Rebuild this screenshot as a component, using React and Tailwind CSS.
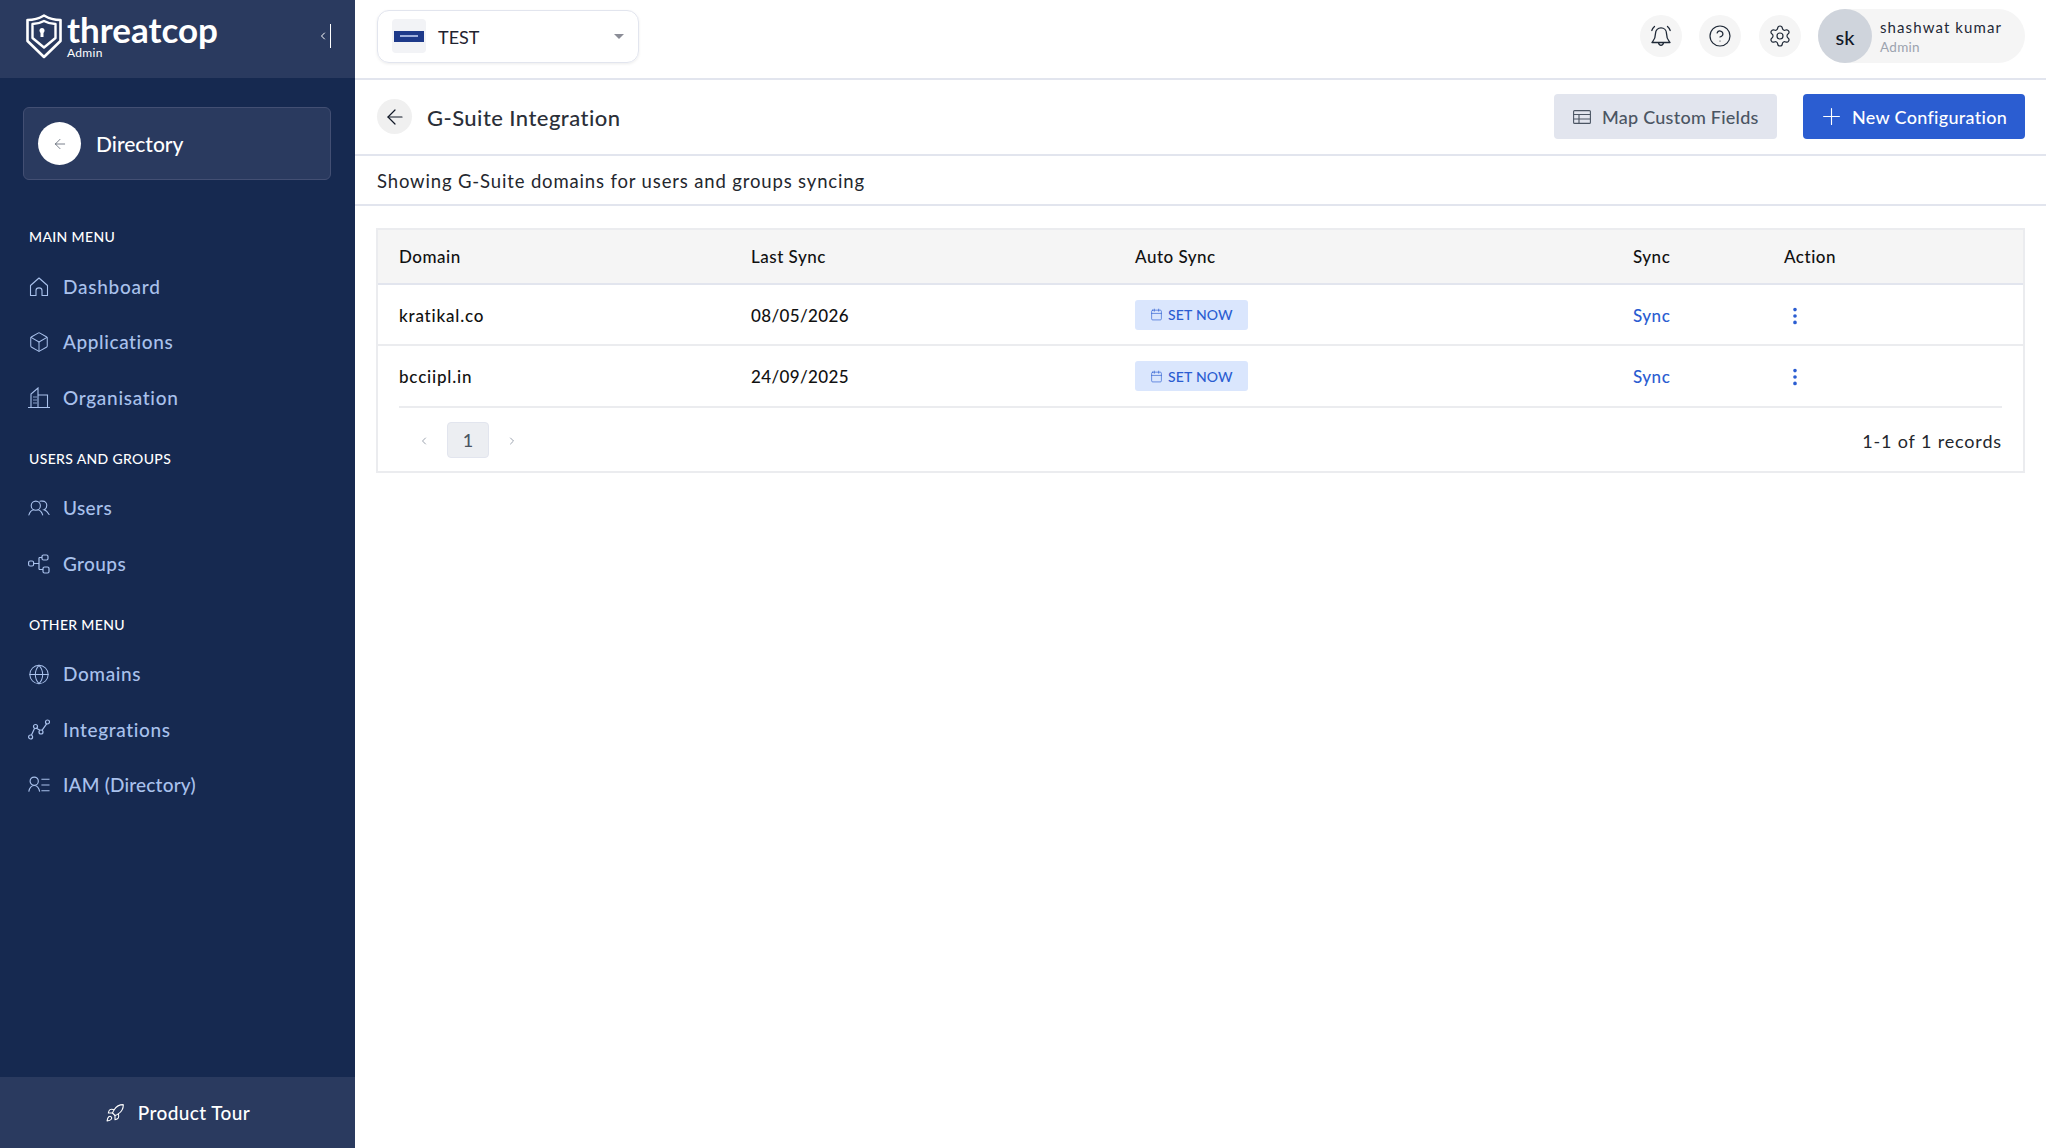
import React from "react";
import { ArrowLeft, Box, Globe, Rocket, Plus, CircleHelp, Settings, Calendar, MoreVertical, ChevronLeft, ChevronRight } from "lucide-react";

const FONT = "font-['Lato','Noto_Sans',sans-serif]";

const HomeIcon = () => (
  <svg width="20" height="20" viewBox="0 0 20 20" fill="none" stroke="currentColor" strokeWidth="1.1" strokeLinejoin="round">
    <path d="M1.500 8.500L10 1L18.500 8.500V18.500H13V13.500C13 10 7 10 7 13.500V18.500H1.500Z" />
  </svg>
);
const UsersIcon = () => (
  <svg width="24" height="18" viewBox="0 0 24 18" fill="none" stroke="currentColor" strokeWidth="1.200" strokeLinecap="round">
    <circle cx="8.500" cy="6.500" r="5" />
    <path d="M1 16.500C2 13.500 4 11.500 6 11M11 11C13 11.500 15 13.500 16 16.500" />
    <path d="M13 1.600C14 1.300 15 1.500 16 1.500C18.500 1.500 20.500 3.500 20.500 6S19 10.500 17.500 11C19.500 11.500 21.500 13.500 23 16" />
  </svg>
);
const Bell2 = () => (
  <svg width="24" height="24" viewBox="0 0 24 24" fill="none" stroke="currentColor" strokeWidth="1.300" strokeLinecap="round" strokeLinejoin="round">
    <path d="M6.500 9.500C6.500 6 9 3.800 12 3.800S17.500 6 17.500 9.500C17.500 15 19.500 16.500 21 18.500H3C4.500 16.500 6.500 15 6.500 9.500Z" />
    <path d="M9.500 18.700C9.800 20.500 10.800 21.300 12 21.300S14.200 20.500 14.500 18.700" />
    <path d="M2.800 6.500C3.300 4.800 4.300 3.500 5.500 2.500M21.200 6.500C20.700 4.800 19.700 3.500 18.500 2.500" />
  </svg>
);
const Building = () => (
  <svg width="22" height="22" viewBox="0 0 22 22" fill="none" stroke="currentColor" strokeWidth="1.100">
    <path d="M0 20.500H22M3 20V7L10 1V20M10 8H19.500V20" />
    <path d="M5.500 10h1M7.500 10h1M5.500 13h1M7.500 13h1M5.500 16h1M7.500 16h1" strokeWidth="1.400" />
  </svg>
);
const Group = () => (
  <svg width="22" height="22" viewBox="0 0 22 22" fill="none" stroke="currentColor" strokeWidth="1.200">
    <rect x="0.600" y="8" width="5" height="5" rx="1.500" />
    <rect x="14" y="2" width="6" height="5" rx="1.500" />
    <rect x="15" y="14" width="6" height="6" rx="1.500" />
    <path d="M5.600 10.500H11M11 4.500V16.500M11 4.500H14M11 16.500H15" />
  </svg>
);
const Graph = () => (
  <svg width="22" height="22" viewBox="0 0 22 22" fill="none" stroke="currentColor" strokeWidth="1.200">
    <circle cx="2.600" cy="18" r="2" /><circle cx="7.500" cy="7.500" r="2" /><circle cx="13" cy="13" r="2" /><circle cx="19.500" cy="3" r="2" />
    <path d="M3.500 16L6.600 9.300M8.400 9.300L12 11.200M14 11.300L18.600 4.800" />
  </svg>
);
const Iam = () => (
  <svg width="23" height="22" viewBox="0 0 23 22" fill="none" stroke="currentColor" strokeWidth="1.200">
    <circle cx="6.500" cy="7" r="4.300" />
    <path d="M0.800 18C1.600 13.800 3.800 11.500 6.500 11.500S11.400 13.800 12.200 18M14 5H22.500M14 11H22.500M14 17H22.500" />
  </svg>
);
const Shield = () => (
  <svg width="36" height="45" viewBox="0 0 36 45" fill="none" stroke="#fff">
    <path d="M1.500 6C8 6 13 4.500 18 1.500C23 4.500 28 6 34.500 6V27L18 43L1.500 27Z" strokeWidth="2.600" strokeLinejoin="round" />
    <path d="M6.500 10C11 10 14.500 9 18 7C21.500 9 25 10 29.500 10V24L18 33.500L6.500 24Z" strokeWidth="2.400" strokeLinejoin="round" />
    <circle cx="16" cy="16.500" r="2.500" fill="#fff" strokeWidth="0" />
    <rect x="14.500" y="17" width="3" height="6" fill="#fff" strokeWidth="0" />
  </svg>
);

const NavItem = ({ icon, label, track = "tracking-[0.6px]" }) => (
  <div className="flex h-[55.500px] items-center pl-[28px] text-[#a9c1ec]">
    <span className="flex w-[22px] justify-center">{icon}</span>
    <span className={`ml-[13px] pb-[1px] text-[19px] font-medium leading-none ${track}`}>{label}</span>
  </div>
);

const Heading = ({ children, className }) => (
  <div className={`pl-[29px] text-[14px] font-medium leading-[18px] tracking-[0.35px] text-white ${className}`}>{children}</div>
);

const IconCircle = ({ children }) => (
  <div className="flex h-[42px] w-[42px] items-center justify-center rounded-full bg-[#f5f5f5] text-[#1f2937]">{children}</div>
);

const rows = [
  { domain: "kratikal.co", last: "08/05/2026", h: "h-[61px]" },
  { domain: "bcciipl.in", last: "24/09/2025", h: "h-[60px]" },
];

export default function App() {
  return (
    <div className={`flex h-[1148px] w-[2046px] overflow-hidden bg-white ${FONT}`}>
      <aside className="flex w-[355px] shrink-0 flex-col bg-[#162950]">
        <div className="flex h-[78px] shrink-0 items-center bg-[#2a3a5f] pb-[6px] pl-[26px] pr-[24px] text-white">
          <Shield />
          <div className="ml-[5px] flex flex-col">
            <span className="text-[35px] font-bold leading-[30px]">threatcop</span>
            <span className="mt-[3px] text-[12px] leading-[12px] tracking-[0.3px]">Admin</span>
          </div>
          <div className="ml-auto flex h-[24px] items-center gap-[1px]">
            <ChevronLeft size={12} strokeWidth={2} />
            <span className="h-[24px] w-[1px] bg-white" />
          </div>
        </div>
        <div className="ml-[23px] mr-[24px] mt-[29px] flex h-[73px] items-center rounded-[6px] border border-[#434f73] bg-[#2a3a5f] pl-[14px]">
          <div className="flex h-[43px] w-[43px] items-center justify-center rounded-full bg-white text-[#374151]">
            <ArrowLeft size={16} strokeWidth={1} />
          </div>
          <span className="ml-[15px] text-[21px] font-medium leading-none text-white">Directory</span>
        </div>
        <Heading className="mt-[48px] mb-[13px]">MAIN MENU</Heading>
        <NavItem icon={<HomeIcon />} label="Dashboard" track="tracking-[0.75px]" />
        <NavItem icon={<Box size={24} strokeWidth={1.100} />} label="Applications" />
        <NavItem icon={<Building />} label="Organisation" track="tracking-[0.7px]" />
        <Heading className="mt-[24px] mb-[13px]">USERS AND GROUPS</Heading>
        <NavItem icon={<UsersIcon />} label="Users" track="tracking-[0.4px]" />
        <NavItem icon={<Group />} label="Groups" track="tracking-[0.4px]" />
        <Heading className="mt-[24px] mb-[13px]">OTHER MENU</Heading>
        <NavItem icon={<Globe size={23} strokeWidth={1.100} />} label="Domains" />
        <NavItem icon={<Graph />} label="Integrations" track="tracking-[0.65px]" />
        <NavItem icon={<Iam />} label="IAM (Directory)" track="tracking-[0.2px]" />
        <div className="mt-auto flex h-[71px] items-center justify-center bg-[#2a3a5f] text-white">
          <Rocket size={20} strokeWidth={1.300} />
          <span className="ml-[13px] text-[19px] font-medium leading-none tracking-[0.4px]">Product Tour</span>
        </div>
      </aside>

      <main className="flex min-w-0 flex-1 flex-col">
        <header className="flex h-[80px] shrink-0 items-center border-b-2 border-[#e2e5ee] pb-[6px] pl-[22px] pr-[21px]">
          <div className="flex h-[53px] w-[262px] items-center rounded-[12px] border border-[#e2e5ee] pl-[14px] pr-[14px] shadow-[0_1px_3px_rgba(0,0,0,0.08)]">
            <div className="flex h-[34px] w-[34px] items-center rounded-[4px] bg-[#f2f3f6]">
              <div className="mx-[2px] flex h-[11px] flex-1 items-center justify-center bg-[#1e3a8a]">
                <div className="h-[2px] w-[18px] bg-[#9fb0dd]" />
              </div>
            </div>
            <span className="ml-[12px] pt-[2px] text-[18px] leading-none text-[#1f2330]">TEST</span>
            <span className="ml-auto h-0 w-0 border-x-[5px] border-t-[5px] border-x-transparent border-t-[#8b8d97]" />
          </div>
          <div className="ml-auto flex items-center gap-[17.500px]">
            <IconCircle><Bell2 /></IconCircle>
            <IconCircle><CircleHelp size={24} strokeWidth={1.200} /></IconCircle>
            <IconCircle><Settings size={24} strokeWidth={1.200} /></IconCircle>
            <div className="flex h-[54px] w-[207px] items-center rounded-full bg-[#f5f5f5]">
              <div className="flex h-[54px] w-[54px] items-center justify-center rounded-full bg-[#cfd4dc] pt-[1px] text-[20px] font-medium text-[#111827]">sk</div>
              <div className="ml-[8px] flex flex-col pt-[1px]">
                <span className="text-[15px] leading-[20px] tracking-[1.1px] text-[#1f2937]">shashwat kumar</span>
                <span className="text-[13.500px] leading-[20px] tracking-[0.3px] text-[#9ca3af]">Admin</span>
              </div>
            </div>
          </div>
        </header>

        <div className="flex h-[74px] shrink-0 items-center pb-[1px] pl-[22px] pr-[21px]">
          <div className="flex h-[35px] w-[35px] items-center justify-center rounded-full bg-[#f0f0f0] text-[#111827]">
            <ArrowLeft size={24} strokeWidth={1.200} />
          </div>
          <h1 className="ml-[15px] pt-[3px] text-[22px] font-medium leading-none tracking-[0.45px] text-[#2b2f38]">G-Suite Integration</h1>
          <button className="ml-auto flex h-[45px] w-[223px] items-center rounded-[4px] bg-[#e2e5ee] pl-[19px] text-[#4b5563]">
            <svg width="18" height="14" viewBox="0 0 18 14" fill="none" stroke="currentColor" strokeWidth="1.100">
              <rect x="0.600" y="0.600" width="16.800" height="12.800" rx="1" />
              <path d="M0.600 4.500H17.400M0.600 9H17.400M6 4.500V13.400" />
            </svg>
            <span className="ml-[11px] text-[18px] font-medium leading-none tracking-[0.25px]">Map Custom Fields</span>
          </button>
          <button className="ml-[26px] flex h-[45px] w-[222px] items-center rounded-[4px] bg-[#2b5dd1] pl-[15px] text-white">
            <Plus size={27} strokeWidth={1} />
            <span className="ml-[7px] text-[18px] font-medium leading-none tracking-[0.3px]">New Configuration</span>
          </button>
        </div>

        <div className="flex h-[52px] shrink-0 items-center border-y-2 border-[#e2e5ee] pl-[22px] pt-[2px] text-[18.500px] leading-none tracking-[0.85px] text-[#24272e]">
          Showing G-Suite domains for users and groups syncing
        </div>

        <section className="mx-[21px] mt-[22px] border-2 border-[#ebecef] text-[17px] text-[#111]">
          <div className="flex h-[55px] items-center border-b-2 border-[#e2e5ee] bg-[#f5f5f5] pt-[1px] font-medium tracking-[0.5px]">
            <div className="w-[372px] pl-[21px]">Domain</div>
            <div className="w-[385px] pl-[1px]">Last Sync</div>
            <div className="w-[498px]">Auto Sync</div>
            <div className="w-[151px]">Sync</div>
            <div>Action</div>
          </div>
          {rows.map((r, i) => (
            <div key={r.domain} className={`flex ${r.h} items-center ${i === 0 ? "border-b-2 border-[#ebecef]" : ""}`}>
              <div className="w-[372px] pl-[21px] pt-[2px] font-medium tracking-[0.8px]">{r.domain}</div>
              <div className="w-[385px] pl-[1px] pt-[2px] font-medium tracking-[0.35px]">{r.last}</div>
              <div className="w-[498px]">
                <span className="flex h-[30px] w-[113px] items-center rounded-[3px] bg-[#dae6fd] pl-[15px] text-[14px] font-medium tracking-[0.2px] text-[#2b5dd1]">
                  <Calendar size={13} strokeWidth={1.200} />
                  <span className="ml-[5px]">SET NOW</span>
                </span>
              </div>
              <div className="w-[151px] pt-[2px] font-medium tracking-[0.5px] text-[#2b5dd1]">Sync</div>
              <div className="pt-[2px] text-[#2b5dd1]"><MoreVertical size={22} strokeWidth={2} /></div>
            </div>
          ))}
          <div className="mx-[21px] flex h-[65px] items-center border-t-2 border-[#ebecef]">
            <ChevronLeft size={12} className="ml-[19px] mt-[3px] text-[#9ca3af]" />
            <span className="ml-[17px] flex h-[36px] w-[42px] items-center justify-center rounded-[4px] border border-[#e2e5ee] bg-[#eceef2] pt-[2px] text-[18px] font-medium text-[#4b5563]">1</span>
            <ChevronRight size={12} className="ml-[17px] mt-[3px] text-[#9ca3af]" />
            <span className="ml-auto pt-[3px] text-[18px] leading-none tracking-[0.85px] text-[#24272e]">1-1 of 1 records</span>
          </div>
        </section>
      </main>
    </div>
  );
}
